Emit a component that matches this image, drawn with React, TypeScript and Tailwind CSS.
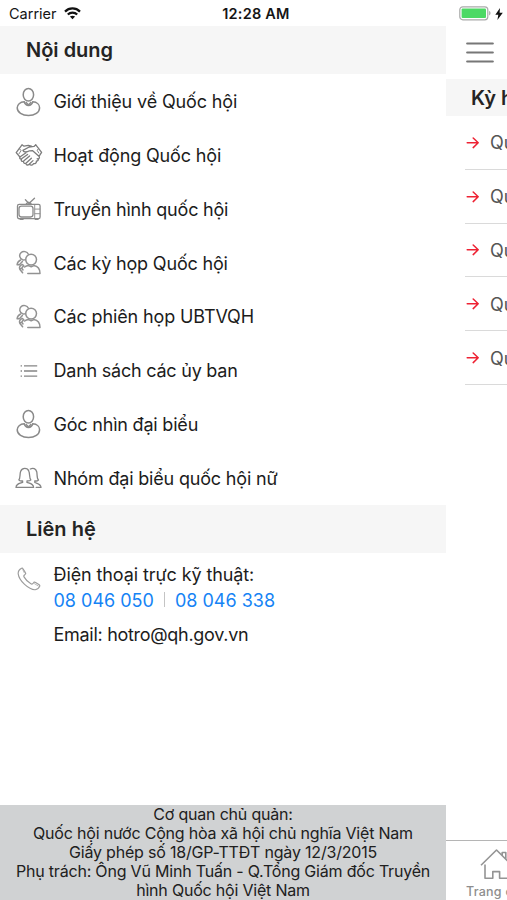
import React from 'react';

type IconProps = { className?: string };

function PersonIcon({ className }: IconProps) {
  return (
    <svg width="26" height="30" viewBox="0 0 26 30" fill="none" stroke="#8a8a8a" strokeWidth="1.5" className={className}>
      <ellipse cx="12.4" cy="7.8" rx="5.2" ry="6.3" />
      <path d="M8.2 14.8C4 15 1.2 17.7 1.2 20.8C1.2 25.4 6.3 28.6 12.5 28.6S23.6 25.4 23.6 20.8C23.6 17.7 21 15 16.8 14.8C16.2 17 14.6 18.4 12.5 18.4S8.8 17 8.2 14.8Z" />
      <path d="M9.7 15L12.5 18L15.3 15" />
    </svg>
  );
}

function HandshakeIcon({ className }: IconProps) {
  return (
    <svg width="28" height="24" viewBox="0 0 28 24" fill="none" stroke="#7c7c7c" strokeWidth="1.3" strokeLinecap="round" strokeLinejoin="round" className={className}>
      <path d="M7 1.8L1.2 9.6L4.9 14M7 1.8L9 3.2L13.3 2.4L16.4 3.2M20.8 1.8L26.6 9.4L24 13.4M20.8 1.8L19 3.4L14.2 4L7.9 7.4C8.4 9.6 11.8 9.3 14.6 7.8L17.4 7.6L24.2 13.4C25 15.2 23.6 16.6 22.2 15.8" />
      <path d="M4.9 14L11 9.8M4.9 14C4.2 15.4 5.4 16.6 6.9 15.6L12.6 11.4M6.4 16.4C5.8 18 7.2 19 8.6 18L14.6 13M8.6 18.6C8.4 20.2 9.8 21 11.2 20L16.4 15.2M11 20.8C11.4 22.3 13 22.3 14.2 21.3L18 17.6" />
      <path d="M14.2 21.3C16 22.8 18 22.2 18.6 20.6C20.2 21 21.6 20 21.4 18.2C23 18 23.6 17 23.2 15.6" />
      <path d="M4.2 5.8L6.2 7.4L4 10.8M23.8 5.6L22 7.2L23.8 10" strokeWidth=".9" />
    </svg>
  );
}

function TvIcon({ className }: IconProps) {
  return (
    <svg width="26" height="24" viewBox="0 0 26 24" fill="none" stroke="#8a8a8a" strokeWidth="1.3" strokeLinecap="round" strokeLinejoin="round" className={className}>
      <path d="M9.4 2.8L12.9 6.5L18.5 1.2M10.4 6.6L12.8 5.2L15 6.6" />
      <rect x="1.5" y="7.4" width="22.6" height="14.3" rx="1.6" />
      <rect x="3" y="9.1" width="14" height="10.9" rx="2.4" />
      <path d="M18.7 7.6V21.4M18.9 12.1H23.8M18.9 16.7H23.8" strokeWidth=".9" />
      <path d="M4.2 22.4H7M19.3 22.4H22" />
    </svg>
  );
}

function PeopleIcon({ className }: IconProps) {
  return (
    <svg width="26" height="26" viewBox="0 0 26 26" fill="none" stroke="#929292" strokeWidth="1.5" strokeLinecap="round" strokeLinejoin="round" className={className}>
      <circle cx="15.1" cy="9.6" r="5.4" />
      <path d="M12.4 4.2C11.2 1.4 7.2 .6 5 2.7C2.7 4.9 3.6 8.8 6.6 9.8C7.6 10.1 8.6 10 9.4 9.6" />
      <path d="M4.6 10C2.6 11 1.3 12.6 1.1 14.8H3.4L6.4 11.6" />
      <path d="M11.8 23.6H24C24 19.2 21.4 16.2 17.8 15.6L15.2 16.8L12.6 15.6C11 15.7 9.6 16.2 8.6 17" />
      <path d="M6.5 14.6C4.1 15 2.8 17.1 3.8 19.2L6.6 22.8M6.5 14.6L7.8 15.8L6.2 17.4M3.8 19.2L5.8 18.2L7 20" />
    </svg>
  );
}

function ListIcon({ className }: IconProps) {
  return (
    <svg width="18" height="14" viewBox="0 0 18 14" fill="none" stroke="#858585" strokeWidth="1.3" className={className}>
      <path d="M4 1.8H17.2M4 7H17.2M4 12.2H17.2M.6 1.8H2M.6 7H2M.6 12.2H2" />
    </svg>
  );
}

function WomenIcon({ className }: IconProps) {
  return (
    <svg width="27" height="22" viewBox="0 0 27 22" fill="none" stroke="#858585" strokeWidth="1.3" strokeLinecap="round" strokeLinejoin="round" className={className}>
      <path d="M7.6 13.8C6 14.2 4.6 13.8 3.8 12.9C5.6 11.5 4.5 6.9 5.7 4.2C6.5 2.3 8 1.3 9.8 1.3S13.2 2.3 13.9 4.2C15 6.9 14.1 11.5 15.9 12.9C15 13.8 13.6 14.2 12 13.8V15.4C15.8 16.7 18.6 17 18.6 20.4H1C1 17 3.8 16.7 7.6 15.4Z" />
      <path d="M15.3 2C18.2.6 20.8 1.7 21.7 4.7C22.4 7.3 21.6 11.6 23.5 13C22.5 13.9 21 14.2 19.8 13.8V15.5C23 16.8 26 17.2 26 20.4H21.2" />
    </svg>
  );
}

function PhoneIcon({ className }: IconProps) {
  return (
    <svg width="24" height="24" viewBox="0 0 24 24" fill="none" stroke="#9b9b9b" strokeWidth="1.15" strokeLinejoin="round" className={className}>
      <path d="M4.6 1.2C2.1 2.5 1 4.3 1.2 6.8C1.7 10.6 4.5 14.5 7.6 17.4C11.1 20.6 15.2 22.9 18.2 22.7C20.5 22.4 22 21 22.8 19.1C22.9 18.5 22.6 18.1 22.2 17.8L18.2 15.3C17.6 14.9 17 15.1 16.6 15.7C15.7 17.1 15 17.4 13.9 16.8C11.3 15.4 8.5 12.5 7 9.9C6.5 8.9 6.8 8.2 8 7.4C8.7 6.9 8.9 6.4 8.5 5.8L6 1.7C5.7 1.1 5.2 .9 4.6 1.2Z" />
      <path d="M5.6 2.3L7.4 6M17.2 16.5L21.6 19.2" strokeWidth=".7" />
    </svg>
  );
}

function WifiIcon() {
  return (
    <svg width="17" height="13" viewBox="0 0 17 13" fill="none" stroke="#111" strokeWidth="2.2">
      <path d="M1 4.6C5.2 .4 11.8 .4 16 4.6M3.8 7.5C6.4 4.9 10.6 4.9 13.2 7.5" />
      <path d="M8.5 12.3L5.9 9.6C7.3 8.3 9.7 8.3 11.1 9.6Z" fill="#111" stroke="none" />
    </svg>
  );
}

function ArrowIcon() {
  return (
    <svg width="14" height="14" viewBox="0 0 14 14" fill="none" stroke="#ee2233" strokeWidth="1.5" strokeLinecap="round" strokeLinejoin="round">
      <path d="M2.2 6.8H13.2M8.2 2L13.2 6.8L8.2 11.6" />
    </svg>
  );
}

function HomeIcon() {
  return (
    <svg width="34" height="32" viewBox="0 0 34 32" fill="none" stroke="#949494" strokeWidth="1.6" strokeLinejoin="round">
      <path d="M1 17.3L16.5 2L32 17.3M22.2 7.7V4.5H25.8V11.1" />
      <path d="M5 16.5V30.3H12.8V23.6H19.6V30.3H28V16.5" />
    </svg>
  );
}

const MENU = [
  { label: 'Giới thiệu về Quốc hội', icon: PersonIcon, tracking: 'tracking-[-0.14px]' },
  { label: 'Hoạt động Quốc hội', icon: HandshakeIcon, tracking: 'tracking-[-0.15px]' },
  { label: 'Truyền hình quốc hội', icon: TvIcon, tracking: 'tracking-[-0.21px]' },
  { label: 'Các kỳ họp Quốc hội', icon: PeopleIcon, tracking: 'tracking-[-0.17px]' },
  { label: 'Các phiên họp UBTVQH', icon: PeopleIcon, tracking: 'tracking-[-0.13px]' },
  { label: 'Danh sách các ủy ban', icon: ListIcon, tracking: 'tracking-[-0.23px]' },
  { label: 'Góc nhìn đại biểu', icon: PersonIcon, tracking: 'tracking-[-0.2px]' },
  { label: 'Nhóm đại biểu quốc hội nữ', icon: WomenIcon, tracking: 'tracking-[-0.18px]' },
];

const SESSIONS = [1, 2, 3, 4, 5];

function StatusBar() {
  return (
    <header className="grid h-[26px] shrink-0 grid-cols-[1fr_auto_1fr] items-center pl-[9px] pr-1 pt-px text-[#151515]">
      <div className="flex items-center gap-[7px] text-[14.5px]">
        <span>Carrier</span>
        <WifiIcon />
      </div>
      <span className="text-[14.5px] font-semibold tracking-[0.22px]">12:28 AM</span>
      <div className="flex items-center justify-end gap-[3px]">
        <svg width="33" height="15" viewBox="0 0 33 15" fill="none">
          <rect x=".8" y=".8" width="28" height="13" rx="3" stroke="#a9aaa9" strokeWidth="1.2" />
          <rect x="2.6" y="2.6" width="24.4" height="9.4" rx="1" fill="#4cd964" />
          <path d="M30.1 5.1C32 5.6 32 9 30.1 9.5Z" fill="#a9aaa9" />
        </svg>
        <svg width="8" height="12" viewBox="0 0 8 12" fill="#111">
          <path d="M5 0L.3 6.8H3.3L2.4 12L7.8 4.8H4.6Z" />
        </svg>
      </div>
    </header>
  );
}

function SectionTitle({ children }: { children: React.ReactNode }) {
  return (
    <h2 className="flex h-12 shrink-0 items-center bg-[#f6f6f6] pl-[26px] text-[20px] font-semibold text-[#242424]">
      {children}
    </h2>
  );
}

function Drawer() {
  return (
    <aside className="flex w-[446px] shrink-0 flex-col bg-white">
      <SectionTitle>Nội dung</SectionTitle>
      <ul className="flex h-[431px] shrink-0 flex-col pt-[0.8px]">
        {MENU.map(({ label, icon: Icon, tracking }) => (
          <li key={label} className="flex flex-1 items-center pl-[14px]">
            <span className="flex w-[29px] shrink-0 justify-center">
              <Icon />
            </span>
            <span className={`ml-[10.5px] whitespace-nowrap text-[18px] text-[#1c1c1c] ${tracking}`}>{label}</span>
          </li>
        ))}
      </ul>
      <SectionTitle>Liên hệ</SectionTitle>
      <div className="flex pl-[17px] pt-[9px] text-[18px] leading-[26px] text-[#1c1c1c]">
        <PhoneIcon className="mt-[5px] shrink-0" />
        <div className="ml-[12.5px] whitespace-nowrap">
          <p className="tracking-[-0.1px]">Điện thoại trực kỹ thuật:</p>
          <p className="flex items-center text-[#1583f5]">
            <a>08 046 050</a>
            <span className="mx-[10px] mb-[3px] h-[15px] w-px bg-[#c4c4c4]" />
            <a>08 046 338</a>
          </p>
          <p className="mt-2 tracking-[-0.29px]">Email: hotro@qh.gov.vn</p>
        </div>
      </div>
      <footer className="mt-auto flex h-[95px] shrink-0 flex-col whitespace-nowrap bg-[#d0d2d3] text-center text-[16px] leading-[19px] tracking-[-0.2px] text-[#202020]">
        <p>Cơ quan chủ quản:</p>
        <p>Quốc hội nước Cộng hòa xã hội chủ nghĩa Việt Nam</p>
        <p>Giấy phép số 18/GP-TTĐT ngày 12/3/2015</p>
        <p>Phụ trách: Ông Vũ Minh Tuấn - Q.Tổng Giám đốc Truyền</p>
        <p>hình Quốc hội Việt Nam</p>
      </footer>
    </aside>
  );
}

function MainPeek() {
  return (
    <main className="flex min-w-0 flex-1 flex-col overflow-hidden whitespace-nowrap bg-white">
      <button className="flex h-[53px] shrink-0 items-center pl-5" aria-label="Menu">
        <svg width="28" height="22" viewBox="0 0 28 22" stroke="#777" strokeWidth="2.2" strokeLinecap="round">
          <path d="M1.2 1.5H26.8M1.2 10.5H26.8M1.2 19.5H26.8" />
        </svg>
      </button>
      <h2 className="flex h-[37px] shrink-0 items-center bg-[#f6f6f6] pl-[25px] text-[20px] font-semibold text-[#242424]">
        Kỳ họp
      </h2>
      <ul className="flex h-[269px] shrink-0 flex-col pl-[19px]">
        {SESSIONS.map((id) => (
          <li key={id} className="flex flex-1 items-center gap-[11px] border-b border-[#dadada] pt-px">
            <span className="shrink-0">
              <ArrowIcon />
            </span>
            <span className="text-[18px] text-[#555]">Quốc hội</span>
          </li>
        ))}
      </ul>
      <nav className="mt-auto flex h-[60px] shrink-0 flex-col border-t border-[#b5b5b5] pl-5 pt-[7px] text-[#8e8e8e]">
        <span className="ml-[14px] h-9 shrink-0">
          <HomeIcon />
        </span>
        <span className="text-[12.5px] font-medium leading-4 tracking-[0.25px]">Trang chủ</span>
      </nav>
    </main>
  );
}

export default function App() {
  return (
    <div className="flex h-[900px] w-[507px] flex-col overflow-hidden bg-white font-[Inter,sans-serif]">
      <StatusBar />
      <div className="flex min-h-0 flex-1">
        <Drawer />
        <MainPeek />
      </div>
    </div>
  );
}
